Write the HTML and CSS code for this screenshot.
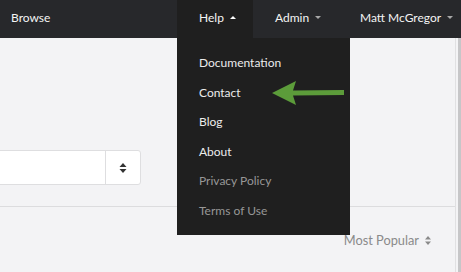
FILE: index.html
```html
<!DOCTYPE html>
<html lang="en">
<head>
    <meta charset="UTF-8">
    <meta name="viewport" content="width=device-width, initial-scale=1.0">
    <title>Browse</title>
    <link rel="stylesheet" href="styles.css">
</head>
<body>
    <nav class="navbar">
        <a class="nav-link brand">Browse</a>
        <div class="nav-right">
            <div class="nav-item help open">
                <a class="nav-link">Help <span class="caret up"></span></a>
                <ul class="dropdown">
                    <li>Documentation</li>
                    <li>Contact</li>
                    <li>Blog</li>
                    <li>About</li>
                    <li class="muted">Privacy Policy</li>
                    <li class="muted">Terms of Use</li>
                </ul>
            </div>
            <div class="nav-item admin">
                <a class="nav-link">Admin <span class="caret"></span></a>
            </div>
            <div class="nav-item user">
                <a class="nav-link">Matt McGregor <span class="caret"></span></a>
            </div>
        </div>
    </nav>

    <div class="page">
        <div class="main">
            <div class="filters">
                <div class="select">
                    <div class="select-value"></div>
                    <div class="select-toggle">
                        <svg width="8" height="10" viewBox="0 0 8 10"><path d="M4 0L7.5 4H0.5Z M4 10L0.5 6H7.5Z" fill="#333"/></svg>
                    </div>
                </div>
            </div>
            <div class="results">
                <div class="sort">Most Popular
                    <svg width="6" height="9" viewBox="0 0 6 9"><path d="M3 0L6 3.5H0Z M3 9L0 5.5H6Z" fill="#8a8a8a"/></svg>
                </div>
            </div>
        </div>
        <div class="side-edge"></div>
    </div>

    <!-- pointer to the contact link -->
    <svg class="arrow" width="74" height="26" viewBox="0 0 74 26">
        <polygon points="0,12 24,0 21,9.5 72,9 72,14 21,14.5 24,24" fill="#5c9c3a"/>
    </svg>
</body>
</html>
```

FILE: styles.css
```css
* {
    box-sizing: border-box;
}

body {
    margin: 0;
    font-family: Lato, "Open Sans", sans-serif;
    font-size: 12px;
    background: #f3f3f5;
    height: 100vh;
    display: flex;
    flex-direction: column;
    overflow: hidden;
}

.navbar {
    display: flex;
    align-items: stretch;
    height: 38px;
    background: #27282b;
    color: #f4f4f4;
}

.nav-link {
    display: flex;
    align-items: center;
    height: 100%;
    padding: 0 0 3px 22px;
    white-space: nowrap;
    cursor: pointer;
}

.brand {
    padding-left: 11px;
}

.nav-right {
    display: flex;
    margin-left: auto;
}

.nav-item {
    position: relative;
}

.nav-item.help {
    width: 76px;
}

.nav-item.admin {
    width: 85px;
}

.nav-item.user {
    width: 123px;
}

.nav-item.open {
    background: #1f1f1f;
}

.caret {
    display: inline-block;
    width: 0;
    height: 0;
    margin-left: 6px;
    border-left: 3px solid transparent;
    border-right: 3px solid transparent;
    border-top: 3px solid #a8a8a8;
}

.caret.up {
    border-top: 0;
    border-bottom: 3px solid #fff;
}

.dropdown {
    position: absolute;
    top: 38px;
    left: 0;
    width: 173px;
    margin: 0;
    padding: 10px 0 10px;
    list-style: none;
    background: #1f1f1f;
    z-index: 2;
}

.dropdown li {
    height: 29.5px;
    line-height: 29.5px;
    padding-left: 22px;
    color: #ececec;
}

.dropdown li.muted {
    color: #979797;
}

.page {
    flex: 1;
    display: flex;
}

.main {
    flex: 1;
    display: flex;
    flex-direction: column;
}

.filters {
    height: 169px;
    padding-top: 112px;
    border-bottom: 1px solid #dcdcde;
}

.select {
    display: flex;
    width: 180px;
    height: 35px;
    margin-left: -39px;
    background: #fff;
    border: 1px solid #dedee0;
    border-radius: 3px;
}

.select-value {
    flex: 1;
}

.select-toggle {
    width: 35px;
    display: flex;
    align-items: center;
    justify-content: center;
    border-left: 1px solid #dedee0;
}

.results {
    display: flex;
    justify-content: flex-end;
    padding: 25px 24px 0 0;
}

.sort {
    display: flex;
    align-items: center;
    gap: 6px;
    font-size: 12.8px;
    color: #8a8a8a;
}

.side-edge {
    width: 6px;
    border-left: 1px solid #e0e0e2;
    background: linear-gradient(to right, #f3f3f5 2px, #c6c6c8 2px);
}

.arrow {
    position: absolute;
    left: 272px;
    top: 81px;
    z-index: 3;
}
```
